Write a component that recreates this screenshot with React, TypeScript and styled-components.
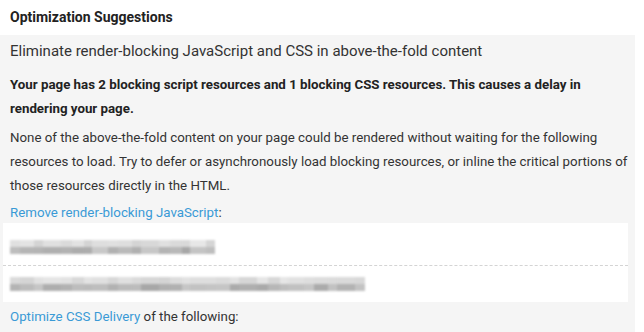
import styled, { createGlobalStyle } from "styled-components";

const Global = createGlobalStyle`
  html, body {
    margin:0;
    padding:0;
    background:#fff;
  }
  body {
    font-family:Roboto, "Liberation Sans", Arial, sans-serif;
    color:#333;
  }
`;

// 가려진 리소스 주소를 모자이크 블록으로 만든다
function mosaic(total: number, seed: number) {
  const sizes = [12, 8, 16, 10, 14, 9, 18, 11];
  const cells: { w: number; top: number; bottom: number }[] = [];
  let used = 0;
  let s = seed;
  for (let i = 0; used < total; ++i) {
    s = (s * 9301 + 49297) % 233280;
    const r = s / 233280;
    const w = Math.min(sizes[(i + seed) % sizes.length], total - used);
    cells.push({ w, top: 0.14 + r * 0.12, bottom: 0.32 + ((r * 7) % 1) * 0.22 });
    used += w;
  }
  return cells;
}

const resources = [mosaic(205, 3), mosaic(355, 11)];

const App = () => {
  return (
    <Page>
      <Global />
      <Title>Optimization Suggestions</Title>
      <Panel>
        <RuleName>Eliminate render-blocking JavaScript and CSS in above-the-fold content</RuleName>
        <Summary>
          Your page has 2 blocking script resources and 1 blocking CSS resources. This causes a delay in
          rendering your page.
        </Summary>
        <Text>
          None of the above-the-fold content on your page could be rendered without waiting for the following
          resources to load. Try to defer or asynchronously load blocking resources, or inline the critical portions of
          those resources directly in the HTML.
        </Text>
        <LinkLine>
          <Link>Remove render-blocking JavaScript</Link>:
        </LinkLine>
        <List>
          {resources.map((cells, index) => (
            <Item key={index}>
              <Blur>
                {cells.map((c, i) => (
                  <Cell key={i} style={{ width: c.w }}>
                    <Shade style={{ opacity: c.top }} />
                    <Shade style={{ opacity: c.bottom }} />
                  </Cell>
                ))}
              </Blur>
            </Item>
          ))}
        </List>
        <LinkLine>
          <Link>Optimize CSS Delivery</Link> of the following:
        </LinkLine>
      </Panel>
    </Page>
  );
};

const Page = styled.div`
  width:644px;
  height:332px;
  overflow:hidden;
`;

const Title = styled.div`
  font-size:14px;
  font-weight:700;
  color:#222;
  padding:9px 10px 0;
  height:26px;
`;

const Panel = styled.div`
  background:#f5f5f5;
  width:635px;
  padding:6px 0 10px;
  box-sizing:border-box;
`;

const RuleName = styled.div`
  font-size:15px;
  line-height:20px;
  padding:0 10px;
  color:#333;
  margin-bottom:12px;
`;

const Summary = styled.div`
  font-size:13.3px;
  font-weight:700;
  line-height:24px;
  padding:0 4px 0 10px;
  color:#222;
  margin-bottom:5px;
`;

const Text = styled.div`
  font-size:13.3px;
  line-height:24px;
  padding:0 4px 0 10px;
  color:#333;
`;

const LinkLine = styled(Text)`
  line-height:20px;
  margin-top:5px;
`;

const Link = styled.span`
  color:#3a9ad6;
`;

const List = styled.div`
  background:#fff;
  margin:0 7px 3px 3px;
  padding-top:6px;
`;

const Item = styled.div`
  height:36px;
  display:flex;
  align-items:center;
  padding:0 7px;
  & + & {
    border-top:1px dashed #d4d4d4;
  }
`;

const Blur = styled.div`
  display:flex;
  filter:blur(1.2px);
`;

const Cell = styled.div`
  display:flex;
  flex-direction:column;
`;

const Shade = styled.div`
  height:7px;
  background:#555;
`;

export default App;
